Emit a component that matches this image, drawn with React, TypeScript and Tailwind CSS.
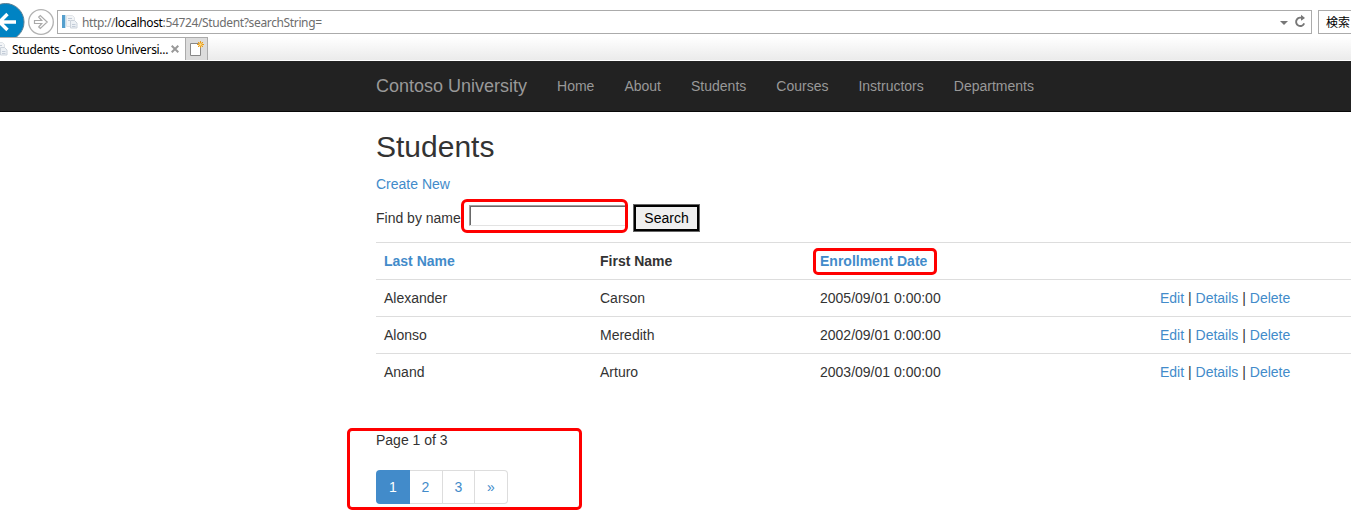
import React from "react";

const navItems = ["Home", "About", "Students", "Courses", "Instructors", "Departments"];

const students = [
  { last: "Alexander", first: "Carson", date: "2005/09/01 0:00:00" },
  { last: "Alonso", first: "Meredith", date: "2002/09/01 0:00:00" },
  { last: "Anand", first: "Arturo", date: "2003/09/01 0:00:00" },
];

function PageIcon({ className }: { className: string }) {
  return (
    <svg className={className} width="16" height="16" viewBox="0 0 16 16">
      <rect x="0" y="1" width="3" height="13" fill="#559fcd" />
      <rect x="3" y="1" width="1" height="13" fill="#c5e0f0" />
      <path d="M4.5 1.5h6l2 2v9h-8z" fill="#f3f5f7" stroke="#e0e4e8" />
      <path d="M8.5 6.5h4l2.5 2.5v5H8.5z" fill="#edf1f5" stroke="#ccd3db" />
      <path d="M6 4.5h4M6 6.5h2M10 10.5h3.5M10 12.5h3.5" stroke="#c3ccd8" />
    </svg>
  );
}

function BrowserChrome() {
  return (
    <div className="h-[61px] overflow-hidden bg-white font-['Noto_Sans','Noto_Sans_CJK_JP',sans-serif] text-[12px]">
      <div className="flex h-[37px] overflow-hidden">
        <svg className="shrink-0" width="57" height="37" viewBox="0 0 57 37">
          <circle cx="5.5" cy="22" r="18.5" fill="#0083c3" stroke="#5c7f92" strokeWidth="1" />
          <path d="M16 22H0M7.5 14L-.5 22l8 8" fill="none" stroke="#fff" strokeWidth="3.4" />
          <circle cx="41" cy="22" r="12.3" fill="#fff" stroke="#b2b2b2" strokeWidth="1.3" />
          <path
            d="M34.5 20.5h7.2l-3-3.5 1.6-1.4 6.9 6.4-6.9 6.4-1.6-1.4 3-3.5h-7.2z"
            fill="#fff"
            stroke="#aaa"
            strokeWidth="1.2"
          />
        </svg>
        <div className="mt-[10px] flex h-6 w-[1255px] shrink-0 items-center border border-[#ababab] bg-white">
          <PageIcon className="ml-[4px] shrink-0" />
          <div className="ml-[4px] pt-[2px] leading-5 tracking-[-0.36px] whitespace-pre text-[#6d6d6d]">
            http://<span className="text-black">localhost</span>:54724/Student?searchString=
          </div>
          <svg className="mr-[2px] ml-auto" width="30" height="16" viewBox="0 0 30 16">
            <path d="M1 7h8L5 11z" fill="#777" />
            <path d="M24.2 4.8A4.2 4.2 0 1 0 25.2 9.4" fill="none" stroke="#777" strokeWidth="1.9" />
            <path d="M22 .8l4 3.2-4 2.8z" fill="#777" />
          </svg>
        </div>
        <div className="mt-[10px] ml-[6px] h-6 w-[60px] shrink-0 border border-[#ababab] pt-px pl-[7px] leading-[22px] whitespace-nowrap text-black">
          検索
        </div>
      </div>
      <div className="flex h-6 border-b border-white bg-linear-to-b from-white to-[#ebebeb]">
        <div className="flex h-[23px] w-[186px] items-center overflow-hidden border-t border-r border-[#ababab] bg-white">
          <PageIcon className="-ml-[8px] shrink-0" />
          <span className="ml-[4px] w-[155px] shrink-0 pt-[2px] tracking-[-0.32px] whitespace-nowrap text-black">
            Students - Contoso Universi...
          </span>
          <svg className="ml-[4px] shrink-0" width="8" height="8" viewBox="0 0 8 8">
            <path d="M.7.7l6.6 6.6M7.3.7L.7 7.3" stroke="#999" strokeWidth="2" />
          </svg>
        </div>
        <div className="h-[23px] w-[22px] border-t border-r border-[#ababab] bg-[#dcdcdc]">
          <svg width="21" height="22" viewBox="0 0 21 22">
            <path d="M4.5 5.5h10v12h-10z" fill="#fff" stroke="#888" />
            <circle cx="14.5" cy="6.5" r="2.3" fill="#ffc83d" />
            <path
              d="M14.5 3v7M11 6.5h7M12 4l5 5M17 4l-5 5"
              stroke="#e89a1c"
              strokeWidth="1"
            />
            <circle cx="14.5" cy="6.5" r="1.2" fill="#ffe082" />
          </svg>
        </div>
      </div>
    </div>
  );
}

function Navbar() {
  return (
    <nav className="flex h-[51px] items-center border-b border-[#080808] bg-[#222] pl-[376px] text-[#999]">
      <span className="mr-[15px] text-[18px] leading-5">Contoso University</span>
      {navItems.map((item) => (
        <a key={item} className="px-[15px] leading-5">
          {item}
        </a>
      ))}
    </nav>
  );
}

function StudentTable() {
  const row = "flex h-[37px] w-[1140px] border-t border-[#ddd] pt-2 leading-5";
  return (
    <div className="mt-[10px] w-[975px] overflow-hidden">
      <div className={`${row} font-bold`}>
        <div className="w-[216px] pl-2 text-[#428bca]">Last Name</div>
        <div className="w-[220px] pl-2">First Name</div>
        <div className="w-[340px] pl-2 text-[#428bca]">Enrollment Date</div>
      </div>
      {students.map((s) => (
        <div key={s.last} className={row}>
          <div className="w-[216px] pl-2">{s.last}</div>
          <div className="w-[220px] pl-2">{s.first}</div>
          <div className="w-[340px] pl-2">{s.date}</div>
          <div className="pl-2">
            <a className="text-[#428bca]">Edit</a> | <a className="text-[#428bca]">Details</a> |{" "}
            <a className="text-[#428bca]">Delete</a>
          </div>
        </div>
      ))}
    </div>
  );
}

function Pagination() {
  const cell = "flex h-[34px] items-center justify-center border-y border-r border-[#ddd] text-[#428bca]";
  return (
    <div className="mt-5 flex">
      <a className="flex h-[34px] w-[34px] items-center justify-center rounded-l bg-[#428bca] text-white">1</a>
      <a className={`${cell} w-[33px] pr-px`}>2</a>
      <a className={`${cell} w-[32px]`}>3</a>
      <a className={`${cell} w-[33px] rounded-r`}>»</a>
    </div>
  );
}

export default function App() {
  return (
    <div className="relative h-[523px] w-[1351px] overflow-hidden bg-white font-['Liberation_Sans',Arial,sans-serif] text-[14px] text-[#333]">
      <BrowserChrome />
      <Navbar />
      <main className="pl-[376px]">
        <h2 className="pt-[18px] text-[30px] leading-[33px]">Students</h2>
        <p className="mt-[11px] leading-5 text-[#428bca]">Create New</p>
        <div className="mt-[10px] flex h-7 items-start">
          <span className="w-[93px] pt-1 leading-5">Find by name:</span>
          <input
            type="text"
            aria-label="Find by name"
            className="mt-[1px] h-[21px] w-[156px] border-t border-b border-l border-t-[#a0a0a0] border-b-[#e3e3e3] border-l-[#a0a0a0] bg-white shadow-[inset_1px_1px_0_#696969] outline-none"
          />
          <button className="ml-[8px] h-7 w-[67px] border border-[#666] bg-[#efefef] text-black">
            <span className="flex h-full items-center justify-center border-2 border-black">Search</span>
          </button>
        </div>
        <StudentTable />
        <p className="mt-[40px] leading-5">Page 1 of 3</p>
        <Pagination />
      </main>
      <div className="absolute top-[199px] left-[461px] h-[34px] w-[167px] rounded-[6px] border-3 border-[#f00]" />
      <div className="absolute top-[248px] left-[813px] h-[27px] w-[124px] rounded-[5px] border-3 border-[#f00]" />
      <div className="absolute top-[428px] left-[347px] h-[82px] w-[235px] rounded-[5px] border-3 border-[#f00]" />
    </div>
  );
}
